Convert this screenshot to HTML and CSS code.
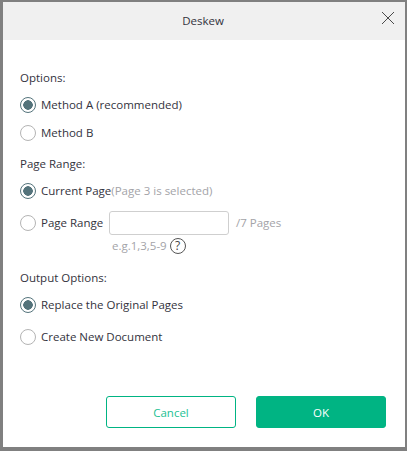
FILE: index.html
```html
<!DOCTYPE html>
<html lang="en">
<head>
<meta charset="utf-8">
<title>Deskew</title>
<link rel="stylesheet" href="styles.css">
</head>
<body>
<div class="dialog">
  <header class="titlebar">
    <span class="title">Deskew</span>
    <svg class="close" width="14" height="14" viewBox="0 0 14 14"><path d="M1 1L13 13M13 1L1 13" stroke="#4a4a4a" stroke-width="1" fill="none"/></svg>
  </header>
  <main class="content">
    <div class="label first">Options:</div>
    <div class="row r1"><span class="radio on"></span><span>Method A (recommended)</span></div>
    <div class="row r2"><span class="radio"></span><span>Method B</span></div>
    <div class="label second">Page Range:</div>
    <div class="row r3"><span class="radio on"></span><span>Current Page</span><span class="muted">(Page 3 is selected)</span></div>
    <div class="row r4"><span class="radio"></span><span class="range-name">Page Range</span><span class="input"></span><span class="muted total">/7 Pages</span></div>
    <div class="hint"><span class="muted">e.g.1,3,5-9</span><span class="help">?</span></div>
    <div class="label third">Output Options:</div>
    <div class="row r5"><span class="radio on"></span><span>Replace the Original Pages</span></div>
    <div class="row r6"><span class="radio"></span><span>Create New Document</span></div>
  </main>
  <footer class="actions">
    <button class="btn cancel">Cancel</button>
    <button class="btn ok">OK</button>
  </footer>
</div>
</body>
</html>
```
FILE: styles.css
```css
* { box-sizing: border-box; }
html, body { margin: 0; height: 100%; }
body { background: #808080; padding: 2px 2px 4px 3px; font-family: "Open Sans", "Noto Sans", sans-serif; font-size: 11.5px; color: #33333d; }
.dialog { height: 445px; background: #fff; display: flex; flex-direction: column; }
.titlebar { height: 38px; flex: none; background: #f0f0f0; display: flex; align-items: center; justify-content: center; position: relative; padding: 0 2px 2px 0; }
.close { position: absolute; right: 10px; top: 9px; }
.content { flex: 1; padding: 0 0 0 17px; }
.label { line-height: 16px; height: 16px; }
.first { margin-top: 30px; }
.row { display: flex; align-items: center; height: 16px; line-height: 16px; }
.radio { width: 16px; height: 16px; border-radius: 50%; border: 1px solid #b4b4b4; margin-right: 5px; flex: none; background: #fff; }
.radio.on { border: 1.5px solid #54737b; background: radial-gradient(circle, #54737b 0 4.5px, #fff 5px); }
.r1 { margin-top: 11px; }
.r2 { margin-top: 12px; }
.second { margin-top: 15px; }
.r3 { margin-top: 11px; }
.r4 { margin-top: 16px; }
.muted { color: #a3a3a8; }
.range-name { width: 68px; flex: none; }
.input { width: 120px; height: 24px; border: 1px solid #cfcfcf; border-radius: 3px; }
.total { margin-left: 7px; }
.hint { display: flex; align-items: center; height: 16px; line-height: 16px; margin: 7px 0 0 92px; }
.help { width: 16px; height: 16px; border: 1px solid #555; border-radius: 50%; margin-left: 3px; text-align: center; line-height: 14px; font-size: 12px; color: #444; }
.third { margin-top: 16px; }
.r5 { margin-top: 11px; }
.r6 { margin-top: 16px; }
.actions { flex: none; display: flex; justify-content: flex-end; gap: 20px; padding: 0 19px 19px 0; }
.btn { width: 130px; height: 32px; border-radius: 3px; font: inherit; padding: 0; }
.cancel { background: #fff; border: 1px solid #00b483; color: #1dbf93; }
.ok { background: #00b483; border: 1px solid #00b483; color: #fff; }
```
